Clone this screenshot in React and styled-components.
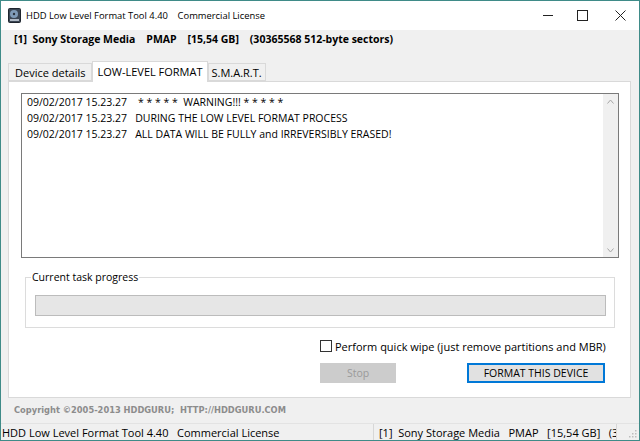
import React from "react";
import styled, { createGlobalStyle } from "styled-components";

const GlobalStyle = createGlobalStyle`
  html, body { margin: 0; padding: 0; background: #ffffff; }
  body { font-family: "Open Sans", "Noto Sans", sans-serif; color: #000; }
  * { box-sizing: border-box; }
`;

const Window = styled.div`
  width: 640px;
  height: 441px;
  border: 1px solid #3f8b88;
  background: #f0f0f0;
  display: flex;
  flex-direction: column;
  overflow: hidden;
`;

const TitleBar = styled.div`
  height: 29px;
  flex: none;
  background: #ffffff;
  display: flex;
  align-items: center;
  padding-left: 7px;
  font-size: 9.4px;
`;

const TitleText = styled.span`
  margin-left: 5px;
  white-space: pre;
  flex: 1;
`;

const WinButton = styled.div`
  width: 38px;
  height: 29px;
  display: flex;
  align-items: center;
  justify-content: center;
  padding-left: ${(p) => p.$shift || 0}px;
`;

const DeviceLine = styled.div`
  margin: 1px 0 0 13px;
  height: 16px;
  line-height: 16px;
  font-size: 10.5px;
  font-weight: 700;
  white-space: pre;
`;

const TabStrip = styled.div`
  margin: 14px 0 0 7px;
  height: 20px;
  display: flex;
  align-items: flex-end;
  position: relative;
  z-index: 1;
`;

const Tab = styled.div`
  height: ${(p) => (p.$active ? 21 : 18)}px;
  margin-bottom: ${(p) => (p.$active ? -1 : 0)}px;
  padding: 0 ${(p) => p.$pad}px ${(p) => (p.$active ? 2 : 0)}px;
  border: 1px solid #d9d9d9;
  border-bottom: ${(p) => (p.$active ? "none" : "1px solid #d9d9d9")};
  background: ${(p) => (p.$active ? "#ffffff" : "#f0f0f0")};
  font-size: 11px;
  display: flex;
  align-items: center;
  white-space: pre;
  position: relative;
  z-index: ${(p) => (p.$active ? 2 : 1)};
`;

const Panel = styled.div`
  margin-left: 7px;
  width: 623px;
  height: 317px;
  flex: none;
  background: #ffffff;
  border: 1px solid #d9d9d9;
  display: flex;
  flex-direction: column;
`;

const LogBox = styled.div`
  margin: 11px 0 0 12px;
  width: 598px;
  height: 165px;
  border: 1px solid #7a7a7a;
  display: flex;
`;

const LogText = styled.div`
  flex: 1;
  padding: 0 0 0 5px;
  font-size: 10.5px;
  line-height: 16px;
  white-space: pre;
`;

const ScrollBar = styled.div`
  width: 15px;
  background: #f0f0f0;
  display: flex;
  flex-direction: column;
  justify-content: space-between;
  align-items: center;
  padding: 5px 0 4px;
`;

const GroupBox = styled.fieldset`
  margin: 12px 0 0 16px;
  width: 590px;
  height: 58px;
  border: 1px solid #dcdcdc;
  padding: 0 9px 0 9px;
  min-width: 0;
`;

const GroupLabel = styled.legend`
  font-size: 10.5px;
  padding: 0 1px;
  margin-left: -4px;
  line-height: 14px;
`;

const ProgressTrack = styled.div`
  margin-top: 11px;
  width: 571px;
  height: 21px;
  background: #e6e6e6;
  border: 1px solid #bcbcbc;
`;

const CheckRow = styled.label`
  margin: 11px 0 0 311px;
  display: flex;
  align-items: center;
  gap: 3px;
  font-size: 11px;
  height: 14px;
  white-space: pre;
`;

const CheckSquare = styled.span`
  width: 12px;
  height: 12px;
  flex: none;
  border: 1px solid #333333;
  background: #ffffff;
`;

const ButtonRow = styled.div`
  margin: 10px 0 0 311px;
  display: flex;
  gap: 71px;
`;

const Button = styled.div`
  width: ${(p) => p.$w}px;
  height: 20px;
  display: flex;
  align-items: center;
  justify-content: center;
  font-size: 10.5px;
  background: ${(p) => (p.$disabled ? "#cccccc" : "#e1e1e1")};
  color: ${(p) => (p.$disabled ? "#9a9a9a" : "#000000")};
  border: 1px solid ${(p) => (p.$primary ? "#0078d7" : "#cccccc")};
  box-shadow: ${(p) => (p.$primary ? "inset 0 0 0 1px #0078d7" : "none")};
`;

const Copyright = styled.div`
  margin: 4px 0 0 13px;
  height: 16px;
  line-height: 16px;
  font-family: "DejaVu Sans", sans-serif;
  font-size: 8.3px;
  font-weight: 700;
  color: #8c8c8c;
  white-space: pre;
`;

const StatusBar = styled.div`
  margin-top: auto;
  height: 17px;
  display: flex;
  align-items: center;
  font-size: 11px;
  border-top: 1px solid #e3e3e3;
`;

const StatusCell = styled.div`
  width: ${(p) => p.$w}px;
  flex: none;
  height: 100%;
  display: flex;
  align-items: center;
  padding-left: ${(p) => p.$pl}px;
  white-space: pre;
  overflow: hidden;
  border-right: ${(p) => (p.$sep ? "1px solid #d7d7d7" : "none")};
`;

const Grip = styled.div`
  flex: 1;
  height: 100%;
  display: flex;
  align-items: flex-end;
  justify-content: flex-end;
  padding: 0 2px 2px 0;
`;

function HddIcon() {
  return (
    <svg width="13" height="15" viewBox="0 0 13 15">
      <rect x="0.5" y="0.5" width="12" height="14" rx="1" fill="#3b4654" stroke="#1e252e" />
      <circle cx="6" cy="6" r="4" fill="#7f9bb8" />
      <circle cx="6" cy="6" r="1.2" fill="#2a323c" />
      <rect x="2" y="11" width="9" height="2" fill="#aeb8c4" />
    </svg>
  );
}

function Arrow({ up }) {
  return (
    <svg width="7" height="5" viewBox="0 0 7 5">
      <path d={up ? "M0.5 4.5 L3.5 1 L6.5 4.5" : "M0.5 0.5 L3.5 4 L6.5 0.5"} fill="none" stroke="#a6a6a6" strokeWidth="1" />
    </svg>
  );
}

export default function App() {
  return (
    <>
      <GlobalStyle />
      <Window>
        <TitleBar>
          <HddIcon />
          <TitleText>{"HDD Low Level Format Tool 4.40    Commercial License"}</TitleText>
          <WinButton $shift={8}>
            <svg width="11" height="11" viewBox="0 0 11 11">
              <path d="M0 5.5 H10" stroke="#222" strokeWidth="1" />
            </svg>
          </WinButton>
          <WinButton>
            <svg width="11" height="11" viewBox="0 0 11 11">
              <rect x="0.5" y="0.5" width="10" height="10" fill="none" stroke="#222" strokeWidth="1" />
            </svg>
          </WinButton>
          <WinButton>
            <svg width="11" height="11" viewBox="0 0 11 11">
              <path d="M0.5 0.5 L10.5 10.5 M10.5 0.5 L0.5 10.5" stroke="#222" strokeWidth="1" />
            </svg>
          </WinButton>
        </TitleBar>

        <DeviceLine>{"[1]  Sony Storage Media    PMAP    [15,54 GB]    (30365568 512-byte sectors)"}</DeviceLine>

        <TabStrip>
          <Tab $pad={6}>Device details</Tab>
          <Tab $pad={4} $active>LOW-LEVEL FORMAT</Tab>
          <Tab $pad={3}>S.M.A.R.T.</Tab>
        </TabStrip>

        <Panel>
          <LogBox>
            <LogText>
              {"09/02/2017 15.23.27    * * * * *  WARNING!!! * * * * *\n"}
              {"09/02/2017 15.23.27   DURING THE LOW LEVEL FORMAT PROCESS\n"}
              {"09/02/2017 15.23.27   ALL DATA WILL BE FULLY and IRREVERSIBLY ERASED!"}
            </LogText>
            <ScrollBar>
              <Arrow up />
              <Arrow />
            </ScrollBar>
          </LogBox>

          <GroupBox>
            <GroupLabel>Current task progress</GroupLabel>
            <ProgressTrack />
          </GroupBox>

          <CheckRow>
            <CheckSquare />
            <span>Perform quick wipe (just remove partitions and MBR)</span>
          </CheckRow>

          <ButtonRow>
            <Button $w={76} $disabled>Stop</Button>
            <Button $w={138} $primary>FORMAT THIS DEVICE</Button>
          </ButtonRow>
        </Panel>

        <Copyright>{"Copyright ©2005-2013 HDDGURU;  HTTP://HDDGURU.COM"}</Copyright>

        <StatusBar>
          <StatusCell $w={373} $pl={1} $sep>{"HDD Low Level Format Tool 4.40   Commercial License"}</StatusCell>
          <StatusCell $w={243} $pl={5} $sep>{"[1]  Sony Storage Media   PMAP   [15,54 GB]   (30365568 512-byte sectors)"}</StatusCell>
          <Grip>
            <svg width="8" height="8" viewBox="0 0 8 8">
              <rect x="6" y="0" width="1.5" height="1.5" fill="#bdbdbd" />
              <rect x="3" y="3" width="1.5" height="1.5" fill="#bdbdbd" />
              <rect x="6" y="3" width="1.5" height="1.5" fill="#bdbdbd" />
              <rect x="0" y="6" width="1.5" height="1.5" fill="#bdbdbd" />
              <rect x="3" y="6" width="1.5" height="1.5" fill="#bdbdbd" />
              <rect x="6" y="6" width="1.5" height="1.5" fill="#bdbdbd" />
            </svg>
          </Grip>
        </StatusBar>
      </Window>
    </>
  );
}
